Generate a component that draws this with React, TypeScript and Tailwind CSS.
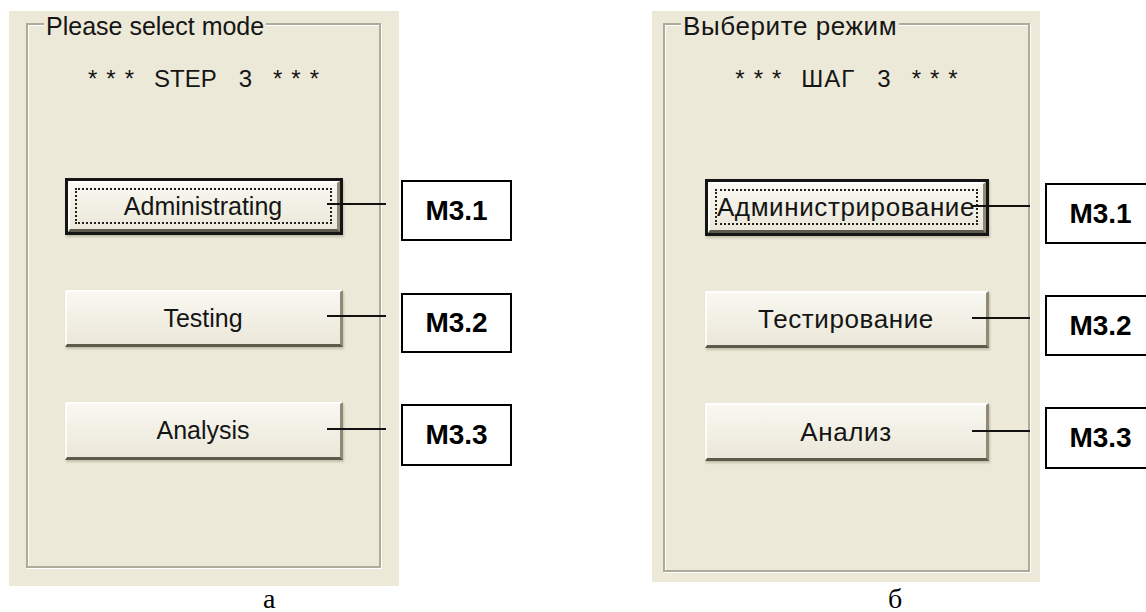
import clsx from 'clsx';

const ui = "font-['Liberation_Sans',Arial,sans-serif]";

interface ModeButtonProps {
  label: string;
  isDefault?: boolean;
  sizeClass: string;
  lineClass: string;
  textClass: string;
}

// Windows XP style push button with a connector line leading out to the label box
function ModeButton({ label, isDefault, sizeClass, lineClass, textClass }: ModeButtonProps) {
  return (
    <div className={clsx('relative flex', sizeClass)}>
      <div
        className={clsx(
          'flex flex-1 shadow-[1px_2px_2px_rgba(80,70,40,0.25)]',
          isDefault && 'border-[3px] border-[#151515]'
        )}
      >
        <div className="flex flex-1 border-t-2 border-l-2 border-r-[3px] border-b-[3px] border-t-white border-l-[#fdfcf6] border-r-[#8e8a77] border-b-[#5e5a4b] bg-linear-to-b from-[#f9f8f1] to-[#ebe8d9] p-[5px]">
          <div
            className={clsx(
              'flex flex-1 items-center justify-center border-2 border-dotted',
              isDefault ? 'border-[#222]' : 'border-transparent'
            )}
          >
            <span className={clsx('whitespace-nowrap leading-none text-[#151515]', textClass)}>{label}</span>
          </div>
        </div>
      </div>
      <div className={clsx('absolute h-[2px] bg-[#111]', lineClass)} />
    </div>
  );
}

function Stars() {
  return (
    <span className="flex gap-[9px] text-[24px]">
      <span>*</span>
      <span>*</span>
      <span>*</span>
    </span>
  );
}

function LabelBox({ text, className }: { text: string; className: string }) {
  return (
    <div
      className={clsx(
        'flex w-[111px] shrink-0 items-center justify-center border-2 border-black bg-white text-[28px] font-bold text-black',
        className
      )}
    >
      {text}
    </div>
  );
}

interface PanelProps {
  title: string;
  step: string;
  buttons: string[];
  panelClass: string;
  buttonWidth: string;
  firstGap: string;
  lines: string[];
  textClass: string;
  stepClass: string;
}

function ModePanel({ title, step, buttons, panelClass, buttonWidth, firstGap, lines, textClass, stepClass }: PanelProps) {
  const heights = ['h-[57px]', 'h-[57px]', 'h-[58px]'];
  const gaps = [firstGap, 'mt-[55px]', 'mt-[55px]'];
  return (
    <div className={clsx('shrink-0 bg-[#ECE9D8]', panelClass)}>
      <div className="relative flex h-full flex-col items-center border-2 border-[#aeab9b] shadow-[inset_1px_1px_0_#fff,1px_1px_0_#fff]">
        <span
          className={clsx(
            'absolute -top-[13px] left-[16px] bg-[#ECE9D8] px-[2px] leading-[28px] text-[#151515]',
            textClass
          )}
        >
          {title}
        </span>
        <div className="mt-[42px] flex items-start text-[24px] leading-[24px] text-[#151515]">
          <Stars />
          <span className={clsx('ml-[20px]', stepClass)}>{step}</span>
          <span className="ml-[22px]">3</span>
          <span className="ml-[21px]">
            <Stars />
          </span>
        </div>
        {buttons.map((b, i) => (
          <div key={b} className={gaps[i]}>
            <ModeButton
              label={b}
              isDefault={i === 0}
              sizeClass={clsx(buttonWidth, heights[i])}
              lineClass={lines[i]}
              textClass={textClass}
            />
          </div>
        ))}
      </div>
    </div>
  );
}

export default function App() {
  return (
    <div className={clsx('h-[612px] w-[1146px] overflow-hidden bg-white', ui)}>
      <div className="flex pl-[9px] pt-[11px]">
        {/* a */}
        <div className="flex shrink-0 flex-col">
          <div className="flex">
            <ModePanel
              title="Please select mode"
              step="STEP"
              buttons={['Administrating', 'Testing', 'Analysis']}
              panelClass="h-[575px] w-[390px] pt-[12px] pl-[17px] pr-[18px] pb-[18px]"
              buttonWidth="w-[278px]"
              firstGap="mt-[87px]"
              textClass="text-[25px]"
              stepClass=""
              lines={[
                'left-[262px] top-[25px] w-[59px]',
                'left-[262px] top-[25px] w-[59px]',
                'left-[262px] top-[26px] w-[59px]',
              ]}
            />
            <div className="ml-[2px] flex flex-col pt-[169px]">
              <LabelBox text="M3.1" className="h-[61px]" />
              <LabelBox text="M3.2" className="mt-[52px] h-[60px]" />
              <LabelBox text="M3.3" className="mt-[51px] h-[62px]" />
            </div>
          </div>
          <div className="mt-[1px] pl-[254px] font-['Liberation_Serif','Times_New_Roman',serif] text-[28px] leading-[24px] text-black">
            а
          </div>
        </div>

        {/* б */}
        <div className="ml-[140px] flex shrink-0 flex-col">
          <div className="flex">
            <ModePanel
              title="Выберите режим"
              step="ШАГ"
              buttons={['Администрирование', 'Тестирование', 'Анализ']}
              panelClass="h-[571px] w-[388px] pt-[12px] pl-[11px] pr-[10px] pb-[10px]"
              buttonWidth="w-[284px]"
              firstGap="mt-[88px]"
              textClass="text-[26px] tracking-[0.6px]"
              stepClass="tracking-[1px]"
              lines={[
                'left-[267px] top-[26px] w-[58px]',
                'left-[267px] top-[26px] w-[58px]',
                'left-[267px] top-[27px] w-[58px]',
              ]}
            />
            <div className="ml-[5px] flex flex-col pt-[172px]">
              <LabelBox text="M3.1" className="h-[61px]" />
              <LabelBox text="M3.2" className="mt-[51px] h-[61px]" />
              <LabelBox text="M3.3" className="mt-[51px] h-[62px]" />
            </div>
          </div>
          <div className="mt-[5px] pl-[236px] font-['Liberation_Serif','Times_New_Roman',serif] text-[28px] leading-[24px] text-black">
            б
          </div>
        </div>
      </div>
    </div>
  );
}
